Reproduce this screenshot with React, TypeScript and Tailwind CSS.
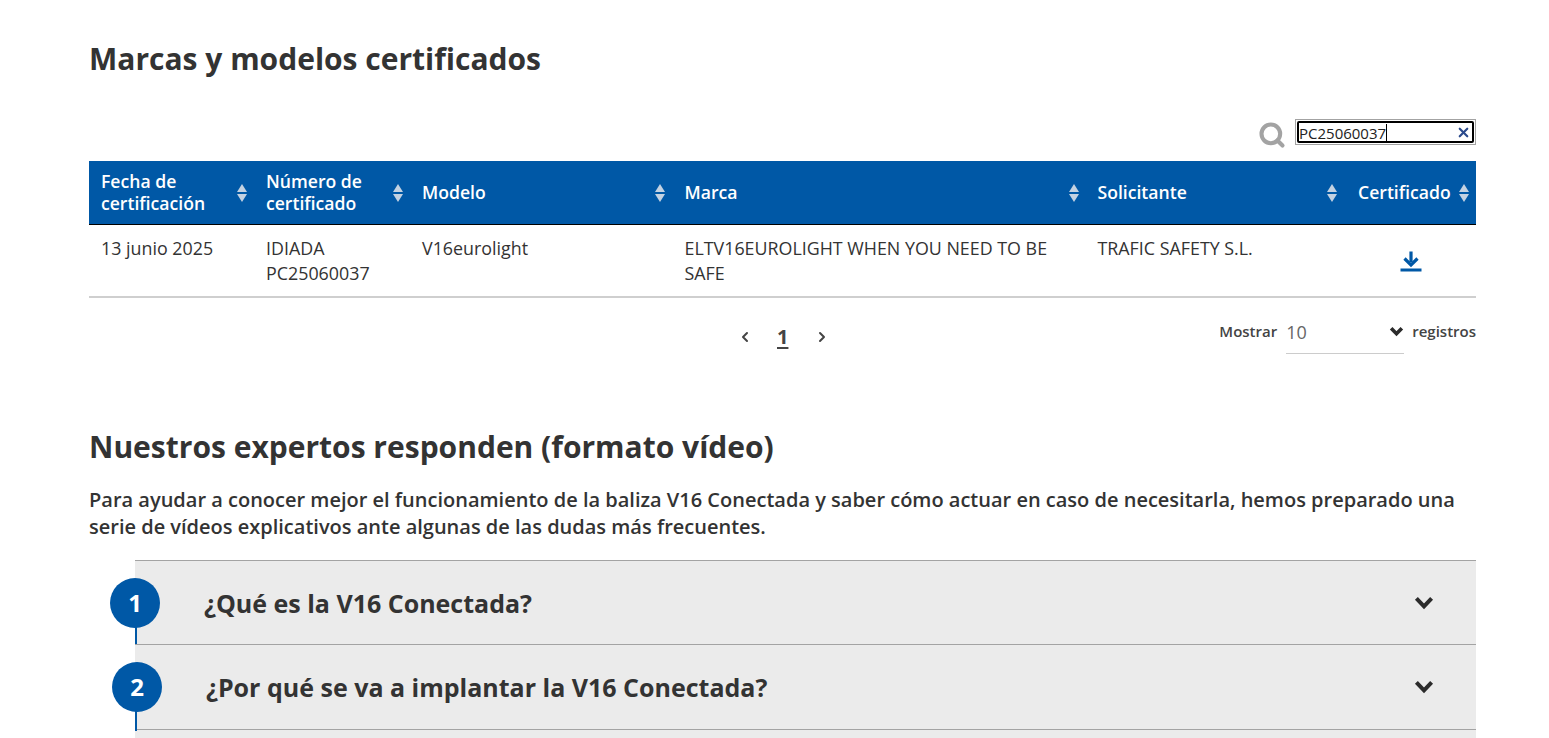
import React from 'react';
import { Search, X, ChevronLeft, ChevronRight } from 'lucide-react';

const columns = 'grid-cols-[165px_156px_262.5px_413px_260.5px_130px]';

const SortIcon = () => (
  <svg width="12" height="20" viewBox="0 0 12 20" className="shrink-0">
    <path d="M6 1 L11 9 H1 Z" fill="#c3d2e2" />
    <path d="M1 11 H11 L6 19 Z" fill="#c3d2e2" />
  </svg>
);

const HeaderCell = ({ label, sortMargin }: { label: React.ReactNode; sortMargin: string }) => (
  <div className="flex items-center justify-between pl-3">
    <span className="text-[17.6px] leading-[22px] font-semibold text-white -mt-[2px]">{label}</span>
    <span className={sortMargin}>
      <SortIcon />
    </span>
  </div>
);

const DownloadIcon = () => (
  <svg width="22" height="22" viewBox="0 0 22 22">
    <path d="M11 1.5 V12" stroke="#0058a6" strokeWidth="3.2" fill="none" />
    <path d="M4.5 8.5 L11 15 L17.5 8.5" stroke="#0058a6" strokeWidth="3.2" fill="none" />
    <rect x="0.5" y="18.5" width="21" height="3" fill="#0058a6" />
  </svg>
);

// thick chevron used by the accordion and the page size select
const Chevron = ({ width, height, stroke }: { width: number; height: number; stroke: number }) => (
  <svg width={width} height={height} viewBox={`0 0 ${width} ${height}`} className="shrink-0">
    <path
      d={`M${stroke * 0.6} ${stroke * 0.6} L${width / 2} ${height - stroke * 0.9} L${width - stroke * 0.6} ${stroke * 0.6}`}
      stroke="#2b2b2b"
      strokeWidth={stroke}
      fill="none"
    />
  </svg>
);

const AccordionRow = ({ n, title, shift, height }: { n: number; title: string; shift: boolean; height: string }) => (
  <div className={`relative ${height} border-t border-[#a3a3a3] bg-[#ebebeb] flex items-center`}>
    <div
      className={`absolute top-[17px] w-[50px] h-[50px] rounded-full bg-[#0058a6] text-white flex items-center justify-center text-[24px] font-bold ${
        shift ? 'left-[-23px]' : 'left-[-25px]'
      }`}
    >
      {n}
    </div>
    <div className="absolute left-0 top-[66px] h-[20px] w-[2px] bg-[#0058a6]" />
    <h3 className={`mt-[2px] text-[25px] font-bold text-[#333] ${shift ? 'ml-[71px]' : 'ml-[69px]'}`}>{title}</h3>
    <div className="ml-auto mr-[42px]">
      <Chevron width={20} height={14} stroke={4} />
    </div>
  </div>
);

export default function App() {
  return (
    <div className="w-[1549px] h-[738px] overflow-hidden bg-white pl-[89px] pr-[73px] font-['Open_Sans',sans-serif] text-[#333]">
      <h2 className="pt-[38px] text-[30px] leading-[42px] font-bold text-[#333]">Marcas y modelos certificados</h2>

      {/* Search */}
      <div className="mt-[39px] h-[42px] flex justify-end items-start gap-[9px]">
        <Search className="mt-[2px] text-[#a3a3a3]" size={28} strokeWidth={3.5} />
        <div className="w-[181px] h-[26px] border border-[#a3a3a3] p-px">
          <div className="h-full flex items-center justify-between rounded-[2px] border-2 border-black pr-[1px] text-[15px] text-[#222]">
            <span className="mt-[1px] border-r border-black leading-[18px]">PC25060037</span>
            <X className="text-[#2b4a8c]" size={15} strokeWidth={3.5} />
          </div>
        </div>
      </div>

      {/* Table */}
      <div className={`grid ${columns} h-[64px] bg-[#0058a6] border-b border-black`}>
        <HeaderCell label={<>Fecha de<br />certificación</>} sortMargin="mr-[6px]" />
        <HeaderCell label={<>Número de<br />certificado</>} sortMargin="mr-[6px]" />
        <HeaderCell label="Modelo" sortMargin="mr-[7px]" />
        <HeaderCell label="Marca" sortMargin="mr-[6px]" />
        <HeaderCell label="Solicitante" sortMargin="mr-[8px]" />
        <HeaderCell label="Certificado" sortMargin="mr-[6px]" />
      </div>
      <div className={`grid ${columns} h-[73px] border-b-2 border-[#cfcfcf] pt-[11px] text-[17.85px] leading-[25px] font-medium text-[#333]`}>
        <div className="pl-3">13 junio 2025</div>
        <div className="pl-3">IDIADA<br />PC25060037</div>
        <div className="pl-3">V16eurolight</div>
        <div className="pl-3">ELTV16EUROLIGHT WHEN YOU NEED TO BE SAFE</div>
        <div className="pl-3">TRAFIC SAFETY S.L.</div>
        <div className="flex justify-center pt-[14px]"><DownloadIcon /></div>
      </div>

      {/* Pagination */}
      <div className="relative h-[57px]">
        <div className="absolute left-[648px] top-[25px] flex items-center text-[#444]">
          <ChevronLeft size={16} strokeWidth={3} />
          <span className="ml-[24px] text-[20px] leading-[27px] font-bold underline underline-offset-[3px]">1</span>
          <ChevronRight className="ml-[26px]" size={16} strokeWidth={3} />
        </div>
        <div className="absolute right-0 top-0 flex items-start text-[15px] text-[#444]">
          <span className="mt-[23px] leading-[20px] font-semibold">Mostrar</span>
          <div className="ml-[9px] w-[118px] h-[56px] border-b border-[#cccccc] flex items-center justify-between pt-[14px]">
            <span className="text-[18px] text-[#666]">10</span>
            <div className="-mt-[3px]">
              <Chevron width={15} height={11} stroke={3.6} />
            </div>
          </div>
          <span className="ml-[8px] mt-[23px] leading-[20px] font-semibold">registros</span>
        </div>
      </div>

      {/* Videos */}
      <h2 className="mt-[71px] text-[30px] leading-[42px] font-bold text-[#333]">Nuestros expertos responden (formato vídeo)</h2>
      <p className="mt-[18px] text-[20px] leading-[27px] font-semibold text-[#333]">
        Para ayudar a conocer mejor el funcionamiento de la baliza V16 Conectada y saber cómo actuar en caso de necesitarla, hemos preparado una serie de vídeos explicativos ante algunas de las dudas más frecuentes.
      </p>
      <div className="mt-[20px] ml-[46px]">
        <AccordionRow n={1} title="¿Qué es la V16 Conectada?" shift={false} height="h-[84px]" />
        <AccordionRow n={2} title="¿Por qué se va a implantar la V16 Conectada?" shift={true} height="h-[85px]" />
        <div className="h-[20px] border-t border-[#a3a3a3] bg-[#ebebeb]" />
      </div>
    </div>
  );
}
